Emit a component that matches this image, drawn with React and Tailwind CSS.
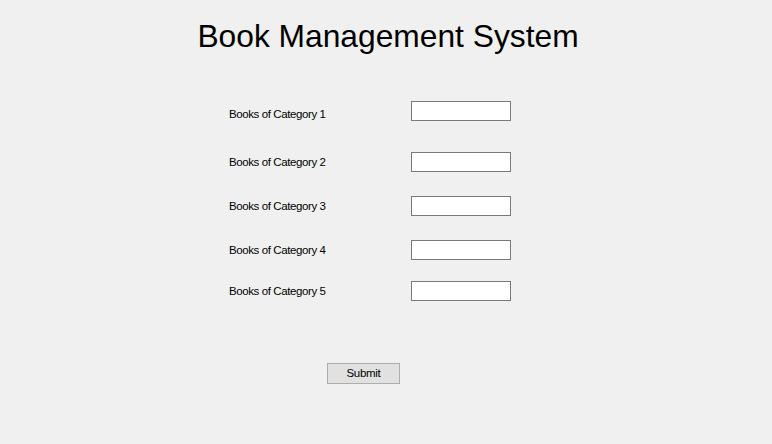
export default function App() {
  const rows = [
    { label: "Books of Category 1", mt: "mt-[46px]", lt: "pt-[6px]" },
    { label: "Books of Category 2", mt: "mt-[31px]", lt: "" },
    { label: "Books of Category 3", mt: "mt-[24px]", lt: "" },
    { label: "Books of Category 4", mt: "mt-[24px]", lt: "" },
    { label: "Books of Category 5", mt: "mt-[21px]", lt: "" },
  ];
  return (
    <div
      className="w-[772px] h-[444px] bg-[#f0f0f0] text-black overflow-hidden"
      style={{ fontFamily: '"Liberation Sans", Arial, sans-serif' }}
    >
      <div className="pt-[18px] pl-[4px] flex justify-center">
        <h1 className="text-[31.75px] leading-[37px] font-normal">Book Management System</h1>
      </div>
      <div className="flex flex-col">
        {rows.map((r) => (
          <div key={r.label} className={`flex items-center h-[20px] ${r.mt}`}>
            <span
              className={`ml-[229px] w-[182px] text-[11.5px] tracking-[-0.4px] leading-[20px] text-[#000] ${r.lt}`}
            >
              {r.label}
            </span>
            <input
              type="text"
              className="w-[100px] h-[20px] bg-white border border-[#7a7a7a] outline-none"
            />
          </div>
        ))}
      </div>
      <div className="mt-[62px] ml-[327px] flex">
        <button className="block w-[73px] h-[21px] bg-[#e1e1e1] border border-[#adadad] text-[11.5px] tracking-[-0.3px] leading-[19px] text-black">
          Submit
        </button>
      </div>
    </div>
  );
}
